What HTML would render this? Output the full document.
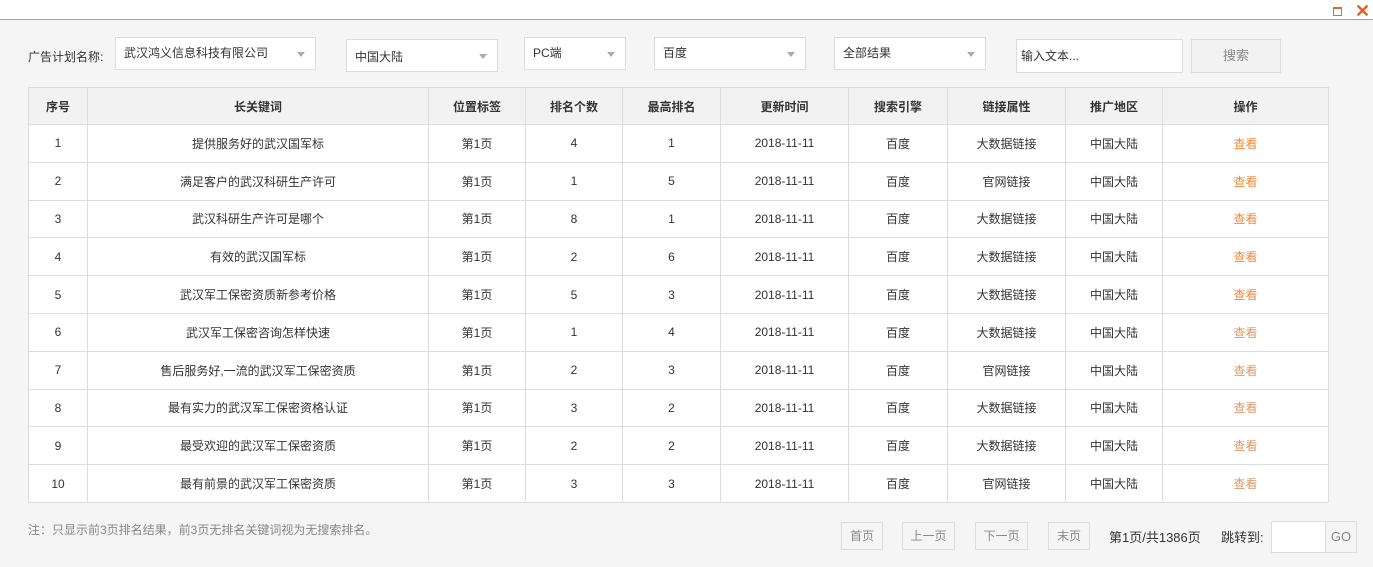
<!DOCTYPE html><html><head><meta charset="utf-8"><style>
*{box-sizing:border-box;margin:0;padding:0}
body{width:1373px;height:567px;background:#f5f5f5;font-family:"Liberation Sans","Noto Sans CJK SC",sans-serif;font-size:12px;color:#333;position:relative;overflow:hidden}
.top{position:absolute;left:0;top:0;width:1373px;height:19px;background:#fff}
.line{position:absolute;left:0;top:19px;width:1373px;height:1px;background:#f08a3c}
.a{position:absolute}
.sel{position:absolute;background:#fff;border:1px solid #ddd;padding-left:8px;line-height:31px;height:33px}
.sel:after{content:"";position:absolute;right:10px;top:14px;border:4px solid transparent;border-top:5px solid #aaa;border-bottom:0}
table{position:absolute;left:28px;top:87px;border-collapse:collapse;background:#fff;width:1301px}
td,th{border:1px solid #ddd;text-align:center;height:37.8px;font-size:12px}
th{background:#f2f2f2;height:37px;font-weight:bold}
.o{color:#f08a3c}.o2{color:#d99a6a}
.btn{position:absolute;top:522px;height:28px;border:1px solid #ddd;color:#888;text-align:center;line-height:26px}
</style></head><body>
<div class="top"></div><div class="line"></div>
<div class="a" style="left:1333px;top:7px;width:9px;height:9px;border:1px solid #e06c2c;border-top-width:2px"></div>
<div class="a" style="left:1355px;top:1px;color:#f05a1a;font-size:18px;font-weight:bold">✕</div>
<div class="a" style="left:28px;top:48px">广告计划名称:</div>
<div class="sel" style="left:115px;top:37px;width:201px">武汉鸿义信息科技有限公司</div>
<div class="sel" style="left:346px;top:39px;width:152px;line-height:35px">中国大陆</div>
<div class="sel" style="left:524px;top:37px;width:102px">PC端</div>
<div class="sel" style="left:654px;top:37px;width:152px">百度</div>
<div class="sel" style="left:834px;top:37px;width:152px">全部结果</div>
<div class="a" style="left:1016px;top:39px;width:167px;height:34px;background:#fff;border:1px solid #ddd;padding-left:4px;line-height:32px">输入文本...</div>
<div class="a" style="left:1191px;top:39px;width:90px;height:34px;background:#f2f2f2;border:1px solid #ddd;text-align:center;line-height:32px;color:#888;font-size:13px">搜索</div>
<table>
<tr><th style="width:59px">序号</th><th style="width:341px">长关键词</th><th style="width:97px">位置标签</th><th style="width:97px">排名个数</th><th style="width:98px">最高排名</th><th style="width:128px">更新时间</th><th style="width:99px">搜索引擎</th><th style="width:118px">链接属性</th><th style="width:97px">推广地区</th><th>操作</th></tr>
<tr><td>1</td><td>提供服务好的武汉国军标</td><td>第1页</td><td>4</td><td>1</td><td>2018-11-11</td><td>百度</td><td>大数据链接</td><td>中国大陆</td><td class="o">查看</td></tr>
<tr><td>2</td><td>满足客户的武汉科研生产许可</td><td>第1页</td><td>1</td><td>5</td><td>2018-11-11</td><td>百度</td><td>官网链接</td><td>中国大陆</td><td class="o">查看</td></tr>
<tr><td>3</td><td>武汉科研生产许可是哪个</td><td>第1页</td><td>8</td><td>1</td><td>2018-11-11</td><td>百度</td><td>大数据链接</td><td>中国大陆</td><td class="o">查看</td></tr>
<tr><td>4</td><td>有效的武汉国军标</td><td>第1页</td><td>2</td><td>6</td><td>2018-11-11</td><td>百度</td><td>大数据链接</td><td>中国大陆</td><td class="o">查看</td></tr>
<tr><td>5</td><td>武汉军工保密资质新参考价格</td><td>第1页</td><td>5</td><td>3</td><td>2018-11-11</td><td>百度</td><td>大数据链接</td><td>中国大陆</td><td class="o">查看</td></tr>
<tr><td>6</td><td>武汉军工保密咨询怎样快速</td><td>第1页</td><td>1</td><td>4</td><td>2018-11-11</td><td>百度</td><td>大数据链接</td><td>中国大陆</td><td class="o2">查看</td></tr>
<tr><td>7</td><td>售后服务好,一流的武汉军工保密资质</td><td>第1页</td><td>2</td><td>3</td><td>2018-11-11</td><td>百度</td><td>官网链接</td><td>中国大陆</td><td class="o2">查看</td></tr>
<tr><td>8</td><td>最有实力的武汉军工保密资格认证</td><td>第1页</td><td>3</td><td>2</td><td>2018-11-11</td><td>百度</td><td>大数据链接</td><td>中国大陆</td><td class="o2">查看</td></tr>
<tr><td>9</td><td>最受欢迎的武汉军工保密资质</td><td>第1页</td><td>2</td><td>2</td><td>2018-11-11</td><td>百度</td><td>大数据链接</td><td>中国大陆</td><td class="o2">查看</td></tr>
<tr><td>10</td><td>最有前景的武汉军工保密资质</td><td>第1页</td><td>3</td><td>3</td><td>2018-11-11</td><td>百度</td><td>官网链接</td><td>中国大陆</td><td class="o2">查看</td></tr>
</table>
<div class="a" style="left:28px;top:521px;color:#888">注：只显示前3页排名结果，前3页无排名关键词视为无搜索排名。</div>
<div class="btn" style="left:841px;width:42px">首页</div>
<div class="btn" style="left:902px;width:53px">上一页</div>
<div class="btn" style="left:975px;width:53px">下一页</div>
<div class="btn" style="left:1048px;width:42px">末页</div>
<div class="a" style="left:1109px;top:527px;color:#333;font-size:13px">第1页/共1386页</div>
<div class="a" style="left:1221px;top:527px;color:#333;font-size:13px">跳转到:</div>
<div class="a" style="left:1271px;top:521px;width:55px;height:32px;background:#fff;border:1px solid #ddd"></div>
<div class="a" style="left:1325px;top:521px;width:32px;height:32px;border:1px solid #ddd;color:#888;text-align:center;line-height:30px;font-size:13px">GO</div>
</body></html>
